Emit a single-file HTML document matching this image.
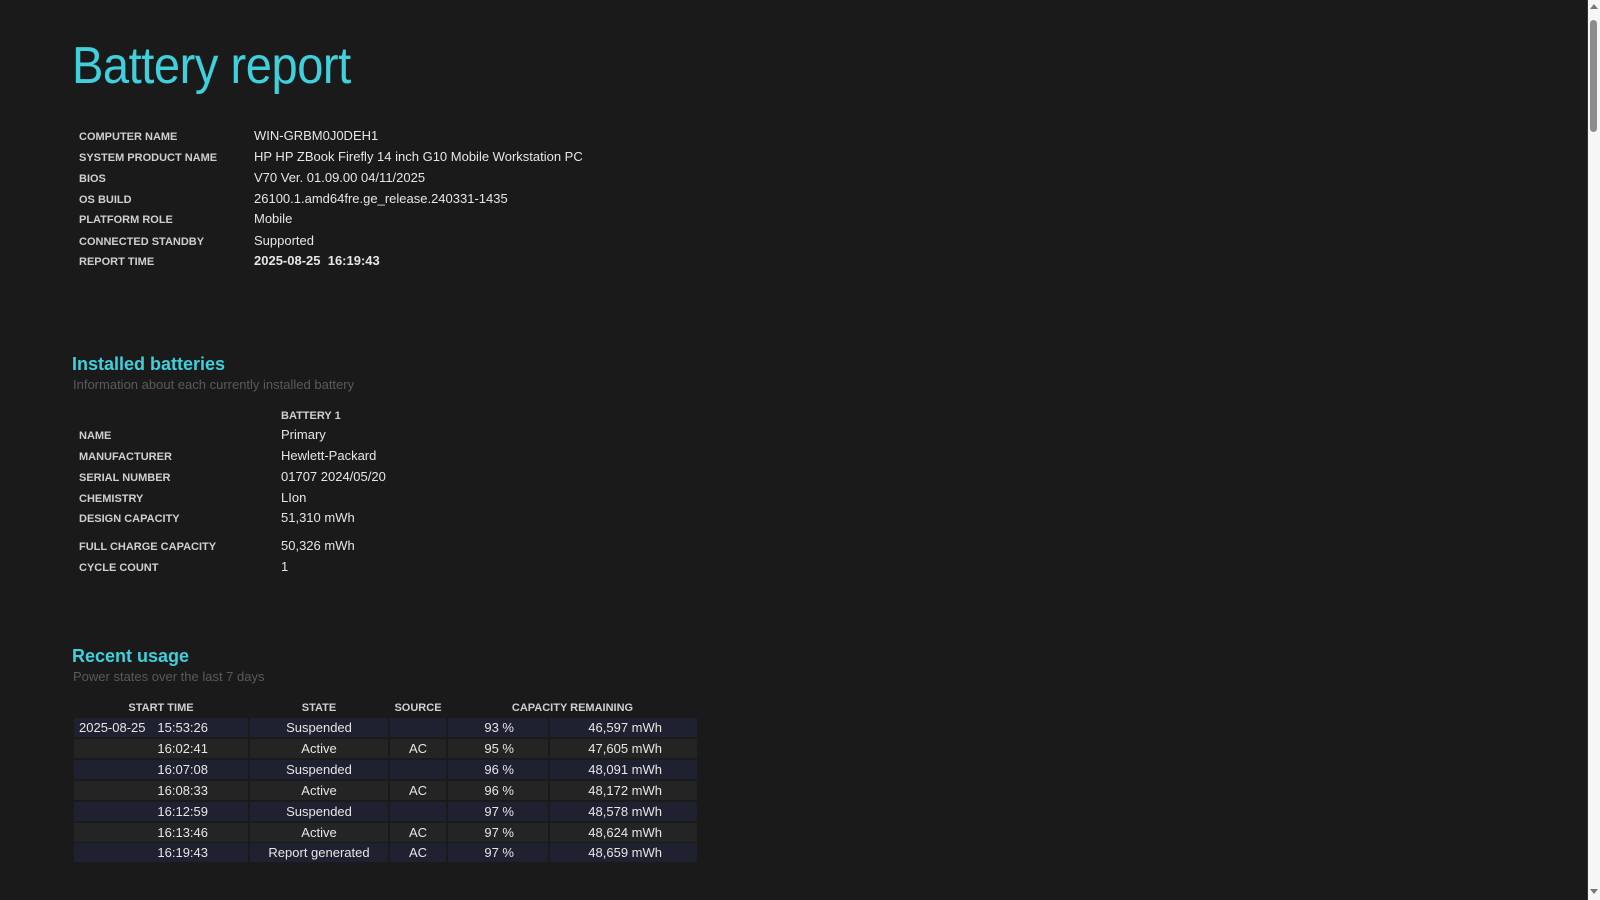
<!DOCTYPE html>
<html><head><meta charset="utf-8"><style>
html,body{margin:0;padding:0;}
body{width:1600px;height:900px;background:#1a1a1a;overflow:hidden;position:relative;font-family:"Liberation Sans",sans-serif;color:#e6e6e6;}
.a{position:absolute;white-space:nowrap;}
.t{left:72px;top:36px;font-size:52px;color:#3fd0dc;letter-spacing:-0.5px;transform:scaleX(0.905);transform-origin:0 0;}
.l{font-size:11px;font-weight:bold;color:#cfcfcf;}
.v{font-size:13px;color:#e6e6e6;}
.h{font-size:18px;font-weight:bold;color:#3fd0dc;}
.s{font-size:13px;color:#5a5a5a;}
.row{position:absolute;left:74px;height:19px;}
.c{position:absolute;top:0;height:19px;line-height:19px;font-size:13px;color:#e6e6e6;}
.sb{position:absolute;left:1587px;top:0;width:13px;height:900px;background:#f6f6f6;border-left:1px solid #333;}
</style></head><body>
<div class="a t">Battery report</div>

<div class="a l" style="left:79px;top:131px">COMPUTER NAME</div><div class="a v" style="left:254px;top:128px">WIN-GRBM0J0DEH1</div>
<div class="a l" style="left:79px;top:152px">SYSTEM PRODUCT NAME</div><div class="a v" style="left:254px;top:149px">HP HP ZBook Firefly 14 inch G10 Mobile Workstation PC</div>
<div class="a l" style="left:79px;top:173px">BIOS</div><div class="a v" style="left:254px;top:170px">V70 Ver. 01.09.00 04/11/2025</div>
<div class="a l" style="left:79px;top:194px">OS BUILD</div><div class="a v" style="left:254px;top:191px">26100.1.amd64fre.ge_release.240331-1435</div>
<div class="a l" style="left:79px;top:214px">PLATFORM ROLE</div><div class="a v" style="left:254px;top:211px">Mobile</div>
<div class="a l" style="left:79px;top:236px">CONNECTED STANDBY</div><div class="a v" style="left:254px;top:233px">Supported</div>
<div class="a l" style="left:79px;top:256px">REPORT TIME</div><div class="a v" style="left:254px;top:253px;font-weight:bold">2025-08-25&nbsp;&nbsp;16:19:43</div>

<div class="a h" style="left:72px;top:354px">Installed batteries</div>
<div class="a s" style="left:73px;top:377px">Information about each currently installed battery</div>
<div class="a l" style="left:281px;top:410px">BATTERY 1</div>
<div class="a l" style="left:79px;top:430px">NAME</div><div class="a v" style="left:281px;top:427px">Primary</div>
<div class="a l" style="left:79px;top:451px">MANUFACTURER</div><div class="a v" style="left:281px;top:448px">Hewlett-Packard</div>
<div class="a l" style="left:79px;top:472px">SERIAL NUMBER</div><div class="a v" style="left:281px;top:469px">01707 2024/05/20</div>
<div class="a l" style="left:79px;top:493px">CHEMISTRY</div><div class="a v" style="left:281px;top:490px">LIon</div>
<div class="a l" style="left:79px;top:513px">DESIGN CAPACITY</div><div class="a v" style="left:281px;top:510px">51,310 mWh</div>
<div class="a l" style="left:79px;top:541px">FULL CHARGE CAPACITY</div><div class="a v" style="left:281px;top:538px">50,326 mWh</div>
<div class="a l" style="left:79px;top:562px">CYCLE COUNT</div><div class="a v" style="left:281px;top:559px">1</div>

<div class="a h" style="left:72px;top:646px">Recent usage</div>
<div class="a s" style="left:73px;top:669px">Power states over the last 7 days</div>
<div class="a l" style="left:74px;top:702px;width:174px;text-align:center">START TIME</div>
<div class="a l" style="left:250px;top:702px;width:138px;text-align:center">STATE</div>
<div class="a l" style="left:390px;top:702px;width:56px;text-align:center">SOURCE</div>
<div class="a l" style="left:448px;top:702px;width:249px;text-align:center">CAPACITY REMAINING</div>

<div id="rows"></div>
<script>
var d=[["","Suspended","","93 %","46,597 mWh"],
["16:02:41","Active","AC","95 %","47,605 mWh"],
["16:07:08","Suspended","","96 %","48,091 mWh"],
["16:08:33","Active","AC","96 %","48,172 mWh"],
["16:12:59","Suspended","","97 %","48,578 mWh"],
["16:13:46","Active","AC","97 %","48,624 mWh"],
["16:19:43","Report generated","AC","97 %","48,659 mWh"]];
var cols=[[0,174],[176,138],[316,56],[374,100],[476,147]];
var h="";
d.forEach(function(r,i){
 var bg=i%2==0?"#1f2030":"#242424";
 var top=718+i*20.9;
 h+='<div class="row" style="top:'+top+'px">';
 cols.forEach(function(c,j){
  var st='left:'+c[0]+'px;width:'+c[1]+'px;background:'+bg+';';
  var inner='';
  if(j==0){ inner = i==0 ? '<span style="position:absolute;left:5px">2025-08-25</span><span style="position:absolute;right:40px">15:53:26</span>' : '<span style="position:absolute;right:40px">'+r[0]+'</span>'; }
  if(j==1||j==2){ st+='text-align:center;'; inner=r[j]; }
  if(j==3){ st+='text-align:right;'; inner='<span style="padding-right:34px">'+r[3]+'</span>'; }
  if(j==4){ st+='text-align:right;'; inner='<span style="padding-right:35px">'+r[4]+'</span>'; }
  h+='<div class="c" style="'+st+'">'+inner+'</div>';
 });
 h+='</div>';
});
document.getElementById('rows').innerHTML=h;
</script>

<div class="sb"></div>
<div class="a" style="left:1590px;top:4px;width:0;height:0;border-left:4px solid transparent;border-right:4px solid transparent;border-bottom:5px solid #777"></div>
<div class="a" style="left:1590px;top:20px;width:7px;height:112px;background:#8c8c8c;border-radius:4px"></div>
<div class="a" style="left:1590px;top:889px;width:0;height:0;border-left:4px solid transparent;border-right:4px solid transparent;border-top:5px solid #777"></div>
</body></html>
